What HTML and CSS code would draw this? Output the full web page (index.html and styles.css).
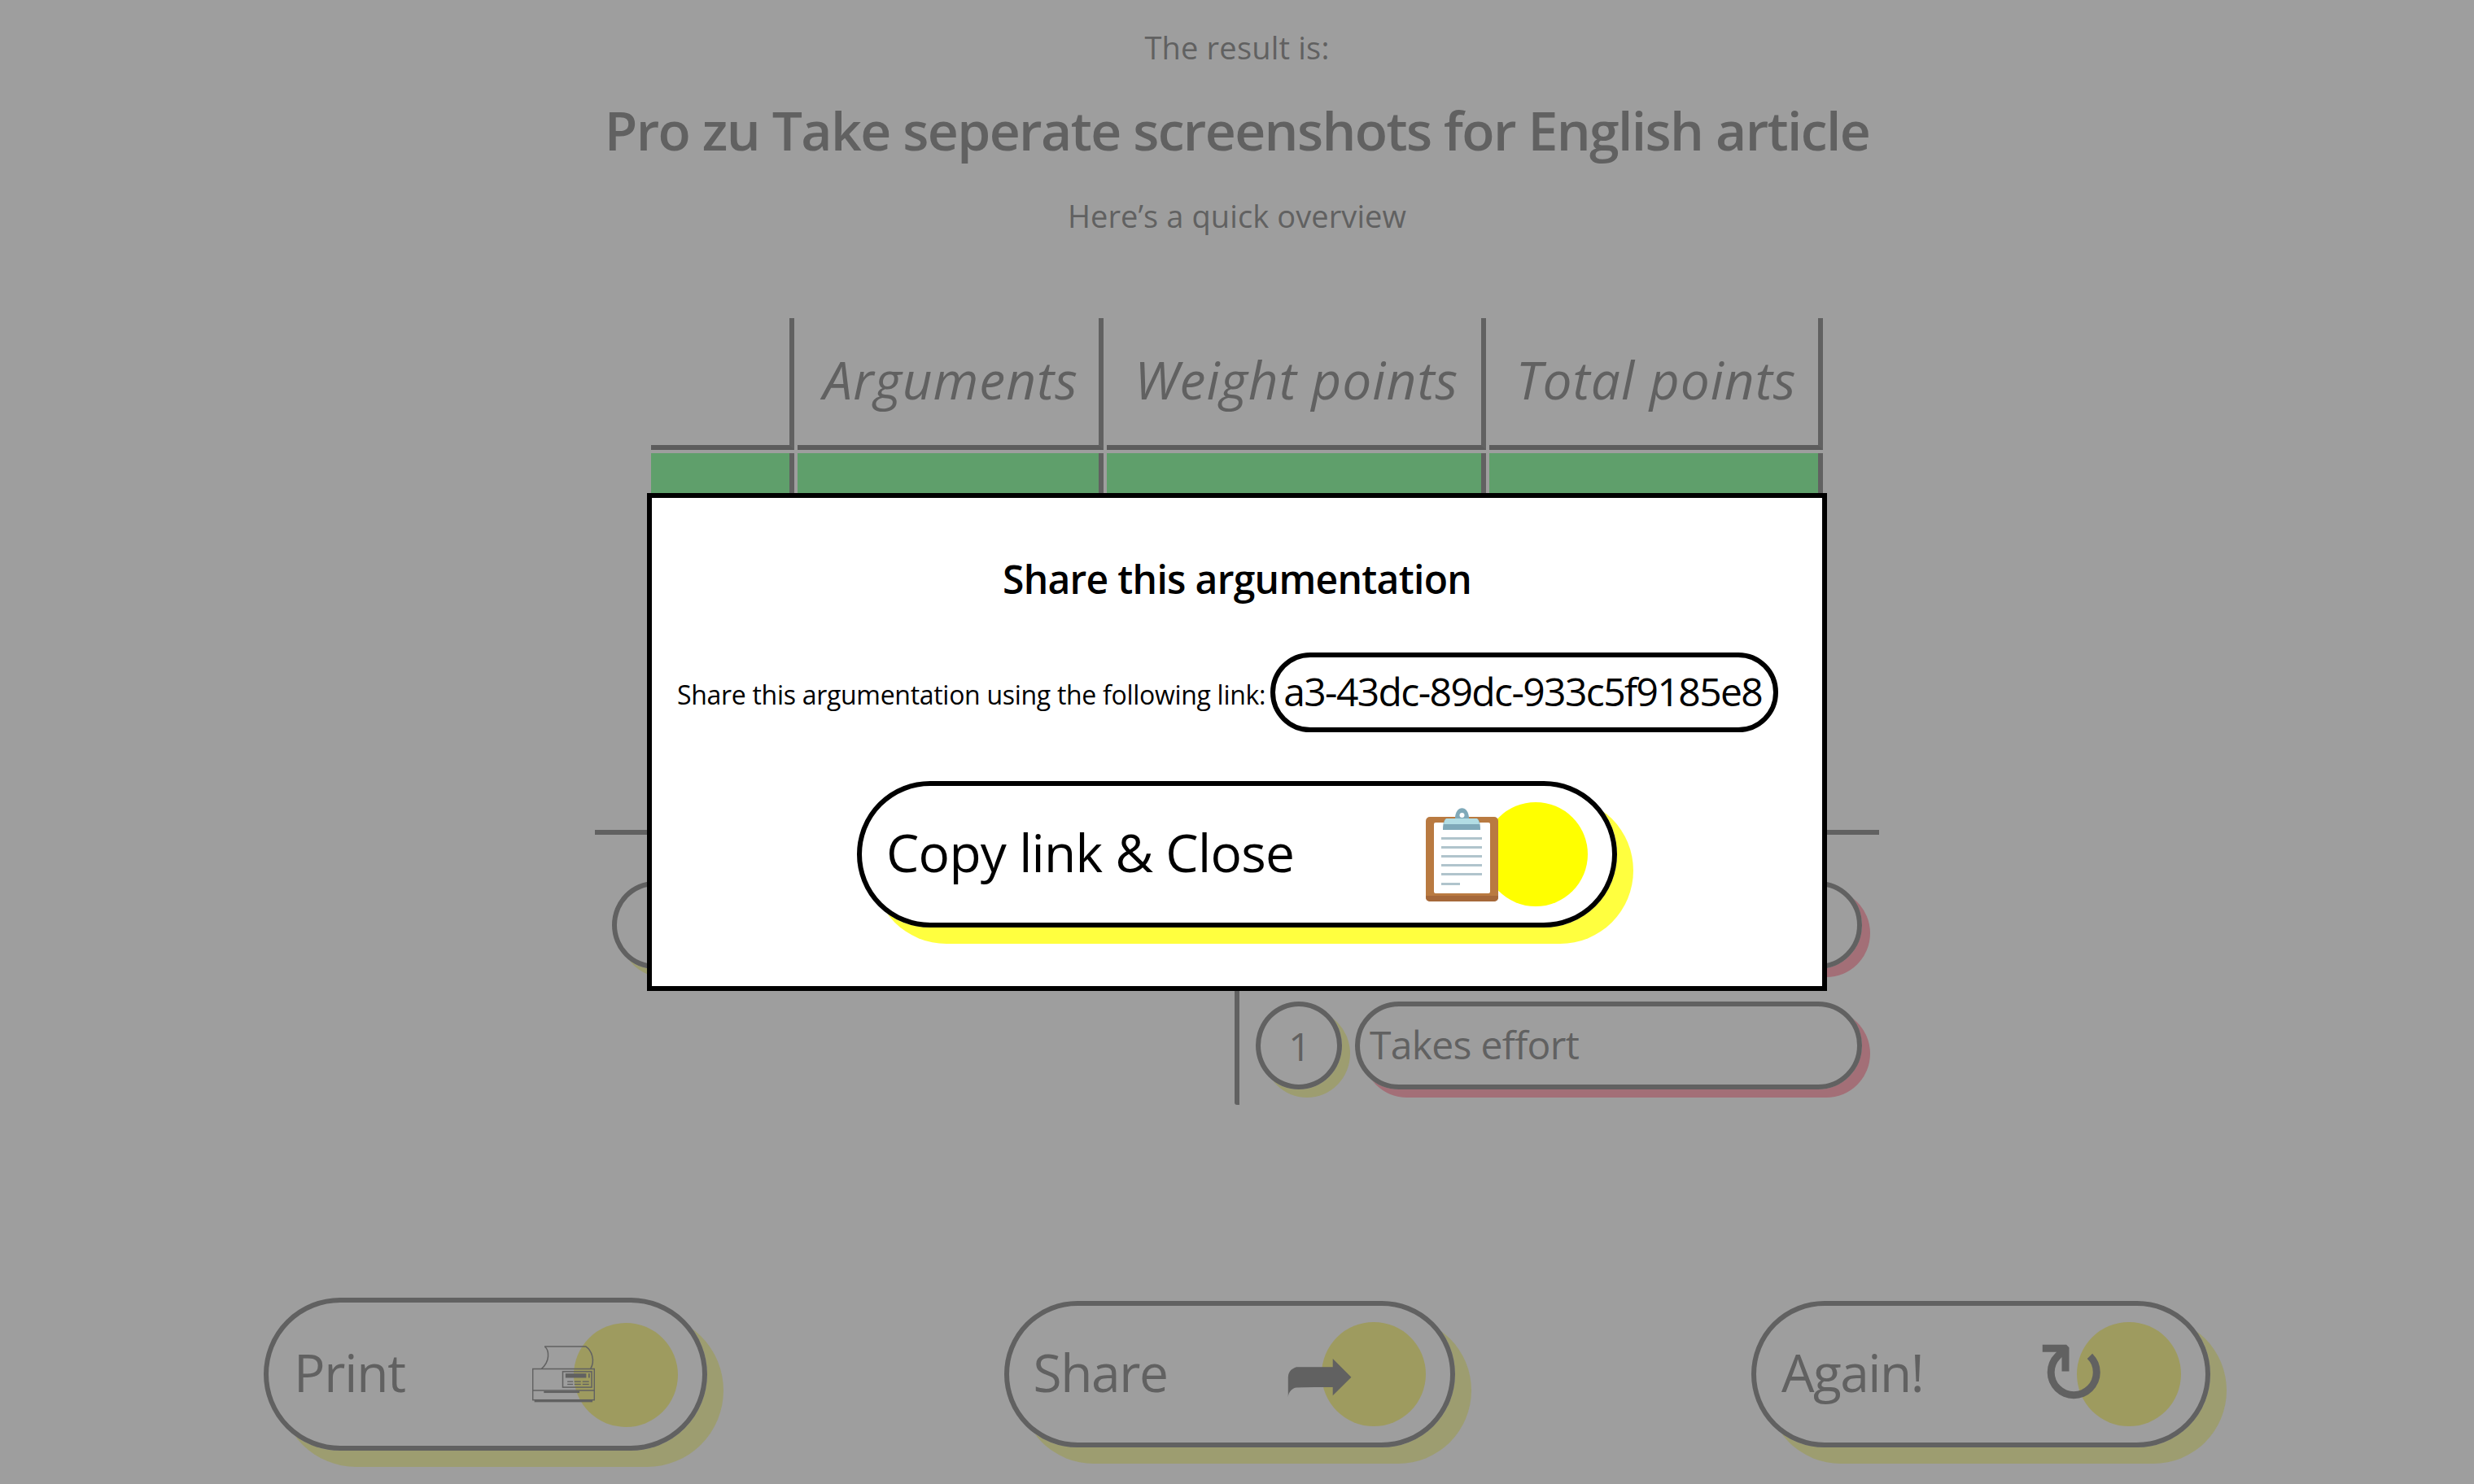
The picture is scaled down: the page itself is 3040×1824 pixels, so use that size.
FILE: index.html
```html
<!DOCTYPE html>
<html lang="en">
<head>
<meta charset="utf-8">
<title>Result</title>
<link rel="stylesheet" href="styles.css">
</head>
<body>
<main class="page">
  <p class="kicker">The result is:</p>
  <h1 class="headline">Pro zu Take seperate screenshots for English article</h1>
  <p class="overview">Here’s a quick overview</p>

  <section class="score-table">
    <div class="head-cell"></div>
    <div class="head-cell"><span class="head-arguments">Arguments</span></div>
    <div class="head-cell"><span class="head-weight">Weight points</span></div>
    <div class="head-cell"><span class="head-total">Total points</span></div>
    <div class="green-cell"></div>
    <div class="green-cell"></div>
    <div class="green-cell"></div>
    <div class="green-cell"></div>
  </section>

  <section class="arguments">
    <div class="arg-col">
      <div class="arg-row">
        <span class="arg-num">1</span>
        <span class="arg-pill arg-pill-pro"></span>
      </div>
    </div>
    <div class="arg-col arg-col-right">
      <div class="arg-row">
        <span class="arg-num">1</span>
        <span class="arg-pill arg-pill-con"></span>
      </div>
      <div class="arg-row">
        <span class="arg-num">1</span>
        <span class="arg-pill arg-pill-con">Takes effort</span>
      </div>
    </div>
  </section>

  <nav class="actions">
    <button class="pill-btn pill-print" type="button">
      <span class="pill-label label-print">Print</span>
      <svg class="icon-print" viewBox="42 65 232 209" width="77" height="70" aria-hidden="true">
        <g fill="none" stroke="#616161" stroke-width="4.5">
          <path d="M88 67H240C262 82 276 118 258 150"/>
          <path d="M88 67C106 82 108 122 76 150"/>
          <rect x="44" y="150" width="228" height="115"/>
          <path d="M44 230H272"/>
          <rect x="155" y="160" width="107" height="58"/>
        </g>
        <g fill="#616161">
          <rect x="165" y="167" width="77" height="16"/>
          <rect x="250" y="167" width="5" height="16"/>
          <rect x="172" y="195" width="21" height="4"/>
          <rect x="198" y="195" width="24" height="4"/>
          <rect x="228" y="195" width="24" height="4"/>
          <rect x="172" y="205" width="21" height="4"/>
          <rect x="198" y="205" width="24" height="4"/>
          <rect x="228" y="205" width="24" height="4"/>
          <rect x="85" y="232" width="132" height="7"/>
          <rect x="50" y="266" width="215" height="7"/>
        </g>
      </svg>
    </button>
    <button class="pill-btn pill-share" type="button">
      <span class="pill-label label-share">Share</span>
      <span class="glyph glyph-share">➦</span>
    </button>
    <button class="pill-btn pill-again" type="button">
      <span class="pill-label label-again">Again!</span>
      <span class="glyph glyph-again">↻</span>
    </button>
  </nav>
</main>

<div class="overlay">
  <div class="modal" role="dialog">
    <h2 class="modal-title">Share this argumentation</h2>
    <div class="link-row">
      <span class="link-label">Share this argumentation using the following link:</span>
      <span class="link-field"><span class="link-value">a3-43dc-89dc-933c5f9185e8</span></span>
    </div>
    <button class="pill-btn pill-copy" type="button">
      <span class="pill-label label-copy">Copy link &amp; Close</span>
      <svg class="icon-clip" viewBox="0 0 89 115" width="89" height="115" aria-hidden="true">
        <rect x="0" y="11" width="89" height="104" rx="5" fill="#b97a41"/>
        <path d="M0 110a5 5 0 0 0 5 5H84a5 5 0 0 0 5-5v-2H0z" fill="#a5683a"/>
        <rect x="10" y="18" width="69" height="87" rx="2" fill="#ffffff"/>
        <g fill="#b0c4cc">
          <rect x="19" y="36" width="50" height="3"/>
          <rect x="19" y="47" width="50" height="3"/>
          <rect x="19" y="58" width="50" height="3"/>
          <rect x="19" y="69" width="50" height="3"/>
          <rect x="19" y="80" width="50" height="3"/>
          <rect x="19" y="92" width="23" height="3"/>
        </g>
        <path d="M36 13C36 -4 53 -4 53 13z" fill="#7fa9b9"/>
        <circle cx="44.500" cy="9" r="3" fill="#ffffff"/>
        <path d="M26 13H62C65 13 67 18 67 27H21C21 18 23 13 26 13z" fill="#7fa9b9"/>
        <path d="M26 13H62C64 13 65 15 66 20H22C23 15 24 13 26 13z" fill="#b2dde4"/>
      </svg>
    </button>
  </div>
</div>
</body>
</html>
```
FILE: styles.css
```css
* { box-sizing: border-box; }
html, body { margin: 0; height: 100%; }
body {
  background: #9e9e9e;
  color: #616161;
  font-family: "Open Sans", "Noto Sans", sans-serif;
  overflow: hidden;
}
.page { height: 1824px; text-align: center; padding-top: 28px; }
.kicker { margin: 0; font-size: 38px; line-height: 60px; letter-spacing: 0.2px; }
.headline { margin: 31px 0 0; font-size: 66px; line-height: 80px; font-weight: 600; letter-spacing: -1.6px; }
.overview { margin: 40px 0 0; font-size: 38px; line-height: 52px; letter-spacing: 0.1px; }

.score-table {
  display: grid;
  grid-template-columns: 176px 376px 466px 410px;
  grid-template-rows: 162px 90px;
  gap: 4px;
  width: 1440px;
  margin: 100px auto 0;
}
.head-cell {
  display: flex;
  align-items: center;
  justify-content: center;
  padding: 0 0 5px 6px;
  border-right: 6px solid #616161;
  border-bottom: 6px solid #5c5c5c;
  font-size: 64px;
  font-style: italic;
  letter-spacing: 1px;
}
.green-cell { background: #5f9f6b; border-right: 6px solid #616161; }

.arguments {
  display: grid;
  grid-template-columns: 1fr 1fr;
  width: 1578px;
  margin: 373px auto 0;
  border-top: 6px solid #616161;
}
.arg-col {
  display: flex;
  flex-direction: column;
  gap: 40px;
  padding: 57px 0 19px 21px;
}
.arg-col-right {
  margin-left: -3px;
  padding-left: 20px;
  border-left: 6px solid #616161;
  border-radius: 0 0 0 3px;
}
.arg-row { display: flex; align-items: center; gap: 16px; height: 108px; }
.arg-num {
  display: flex;
  align-items: center;
  justify-content: center;
  flex: 0 0 106px;
  height: 108px;
  padding-left: 2px;
  border: 6px solid #616161;
  border-radius: 50%;
  font-size: 48px;
  box-shadow: 10px 10px 0 #9d9d70;
}
.arg-pill {
  display: block;
  flex: 0 0 623px;
  height: 108px;
  padding-left: 12px;
  border: 6px solid #616161;
  border-radius: 54px;
  font-size: 48px;
  line-height: 94px;
  letter-spacing: -0.7px;
  text-align: left;
}
.arg-pill-con { box-shadow: 10px 10px 0 #a36f77; }
.arg-pill-pro { box-shadow: 10px 10px 0 #6f9f77; }

.actions {
  display: flex;
  align-items: center;
  justify-content: space-between;
  height: 188px;
  margin-top: 237px;
  padding: 0 324px;
}
.pill-btn {
  position: relative;
  display: flex;
  align-items: center;
  justify-content: space-between;
  height: 180px;
  padding: 0;
  border: 6px solid #616161;
  border-radius: 90px;
  background: transparent;
  color: inherit;
  font-family: inherit;
  font-size: 64px;
  box-shadow: 20px 20px 0 #9d9d70;
}
.pill-btn::before {
  content: "";
  position: absolute;
  right: 30px;
  top: 20px;
  width: 128px;
  height: 128px;
  border-radius: 50%;
  background: #9e9b5f;
}
.pill-label, .pill-btn svg, .glyph { position: relative; }
.pill-label { margin-bottom: 6px; }
.pill-print { width: 545px; height: 188px; border-radius: 94px; }
.pill-print::before { top: 25px; }
.pill-share { width: 554px; }
.pill-again { width: 564px; }
.label-print { margin-left: 31px; letter-spacing: -1.2px; }
.label-share { margin-left: 30px; letter-spacing: -1.4px; }
.label-again { margin-left: 31px; letter-spacing: -1.5px; }
.icon-print { margin-right: 132px; }
.glyph { font-family: "DejaVu Sans", sans-serif; line-height: 1; }
.glyph-share { margin-right: 116px; font-size: 106px; padding-top: 2px; }
.glyph-again { margin-right: 118px; font-size: 108px; }

.overlay {
  position: fixed;
  inset: 0;
  display: flex;
  align-items: center;
  justify-content: center;
}
.modal {
  width: 1450px;
  height: 612px;
  padding-top: 70px;
  border: 6px solid #000;
  background: #fff;
  color: #000;
  text-align: center;
}
.modal-title { margin: 0; font-size: 48px; line-height: 60px; font-weight: 600; letter-spacing: -0.7px; }
.link-row { display: flex; align-items: center; gap: 6px; margin-top: 60px; padding-left: 31px; }
.link-label { font-size: 32px; line-height: 40px; letter-spacing: -0.3px; margin-top: 6px; white-space: nowrap; }
.link-field {
  display: block;
  flex: 0 0 624px;
  height: 98px;
  padding-left: 10px;
  border: 6px solid #000;
  border-radius: 49px;
  font-size: 48px;
  line-height: 84px;
  letter-spacing: -1.6px;
  text-align: left;
  white-space: nowrap;
  overflow: hidden;
}
.pill-copy {
  width: 934px;
  margin: 60px auto 0;
  border-color: #000;
  color: #000;
  box-shadow: 20px 20px 0 #ffff3f;
}
.pill-copy::before { background: #ffff00; }
.label-copy { margin-left: 30px; font-size: 64px; letter-spacing: -0.7px; }
.icon-clip { margin-right: 140px; }
```
